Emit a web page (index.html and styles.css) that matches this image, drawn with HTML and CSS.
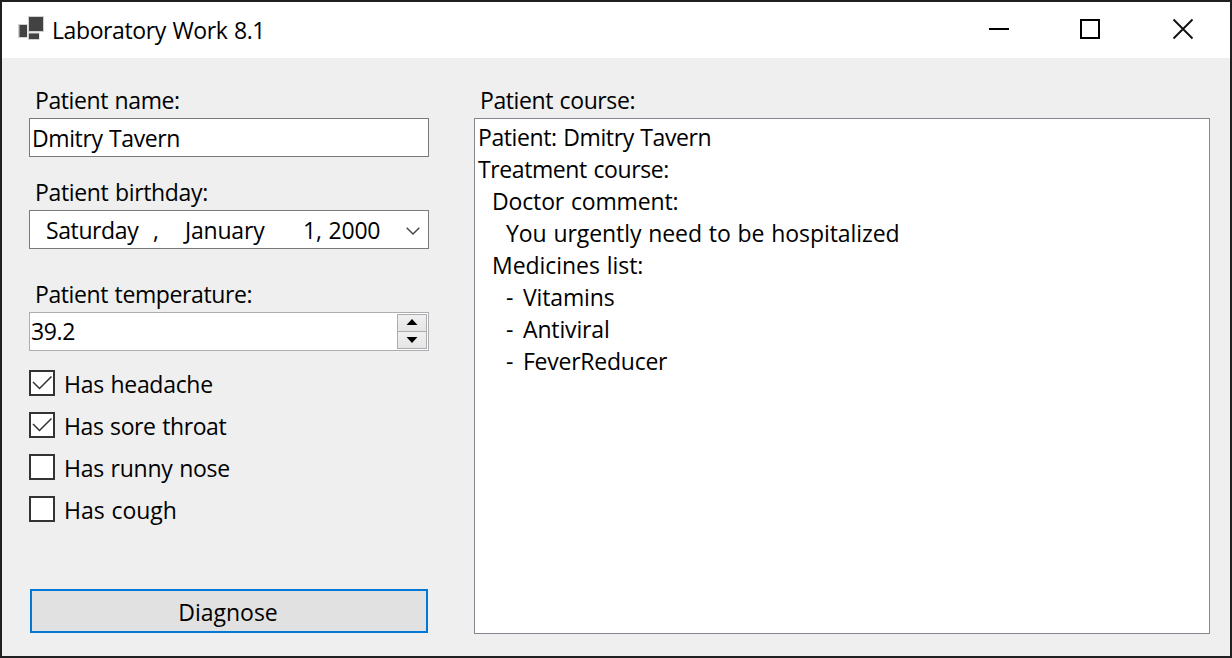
FILE: index.html
```
<!DOCTYPE html>
<html lang="en">
<head>
<meta charset="utf-8">
<title>Laboratory Work 8.1</title>
<link rel="stylesheet" href="styles.css">
</head>
<body>
<div class="window">
  <header class="titlebar">
    <svg class="app-icon" width="26" height="24" viewBox="0 0 26 24">
      <g fill="#d0d0d0"><rect x="10" y="0" width="16" height="16"/><rect x="0" y="8" width="9.500" height="14"/><rect x="10" y="16.500" width="11.500" height="7.500"/></g>
      <g fill="#424242"><rect x="11" y="1" width="14" height="14"/><rect x="1.500" y="9" width="7.500" height="12"/><rect x="11" y="17.500" width="10" height="5.500"/></g>
    </svg>
    <span class="title">Laboratory Work 8.1</span>
    <div class="controls">
      <svg class="control" width="92" height="56" viewBox="0 0 92 56"><path d="M35 27h20" stroke="#000" stroke-width="2"/></svg>
      <svg class="control" width="92" height="56" viewBox="0 0 92 56"><rect x="35" y="18" width="18" height="18" fill="none" stroke="#000" stroke-width="2"/></svg>
      <svg class="control" width="92" height="56" viewBox="0 0 92 56"><path d="M35.500 17.500l19 19M54.500 17.500l-19 19" stroke="#111" stroke-width="1.900"/></svg>
    </div>
  </header>
  <main class="form">
    <section class="inputs">
      <div class="label">Patient name:</div>
      <div class="box name">Dmitry Tavern</div>
      <div class="label birthday-label">Patient birthday:</div>
      <div class="box date">
        <span class="weekday">Saturday</span><span class="comma">,</span><span class="month">January</span><span class="day">1, 2000</span>
        <svg class="chevron" width="14" height="8" viewBox="0 0 14 8"><path d="M.700.700L7 7L13.300.700" fill="none" stroke="#444" stroke-width="1.400"/></svg>
      </div>
      <div class="label temperature-label">Patient temperature:</div>
      <div class="box temperature">
        <span>39.2</span>
        <div class="spinner">
          <div class="spin up"><svg width="12" height="6" viewBox="0 0 12 6"><path d="M6 0l5.500 6H.500z"/></svg></div>
          <div class="spin"><svg width="12" height="6" viewBox="0 0 12 6"><path d="M6 6L.500 0h11z"/></svg></div>
        </div>
      </div>
      <div class="checks">
        <div class="check"><svg class="tick" width="26" height="26" viewBox="0 0 26 26"><path d="M4 12l6.500 6.500L22.500 6.500" fill="none" stroke="#333" stroke-width="1.500"/></svg><span class="headache">Has headache</span></div>
        <div class="check"><svg class="tick" width="26" height="26" viewBox="0 0 26 26"><path d="M4 12l6.500 6.500L22.500 6.500" fill="none" stroke="#333" stroke-width="1.500"/></svg><span>Has sore throat</span></div>
        <div class="check"><svg class="tick" width="26" height="26"></svg><span class="runny-nose">Has runny nose</span></div>
        <div class="check"><svg class="tick" width="26" height="26"></svg><span class="cough">Has cough</span></div>
      </div>
      <div class="button">Diagnose</div>
    </section>
    <section class="course">
      <div class="label">Patient course:</div>
      <div class="output">
        <div class="line">Patient: Dmitry Tavern</div>
        <div class="line">Treatment course:</div>
        <div class="line section comment-title">Doctor comment:</div>
        <div class="line entry comment">You urgently need to be hospitalized</div>
        <div class="line section medicines-title">Medicines list:</div>
        <div class="line entry medicine"><span class="dash">-</span>Vitamins</div>
        <div class="line entry medicine"><span class="dash">-</span>Antiviral</div>
        <div class="line entry medicine fever"><span class="dash">-</span>FeverReducer</div>
      </div>
    </section>
  </main>
</div>
</body>
</html>
```
FILE: styles.css
```
* { box-sizing: border-box; }
body {
  margin: 0;
  font-family: "Open Sans", "Noto Sans", sans-serif;
  font-size: 23px;
  line-height: 32px;
  letter-spacing: -0.4px;
  word-spacing: 1px;
  color: #000;
}
svg { display: block; flex: none; }
.window {
  width: 1232px;
  height: 658px;
  border: 2px solid #202022;
  background: #efefef;
  display: flex;
  flex-direction: column;
}
.titlebar {
  height: 56px;
  background: #fff;
  display: flex;
  align-items: flex-start;
}
.app-icon { margin: 14px 0 0 16px; }
.title { margin: 12px 0 0 8px; letter-spacing: -0.4px; }
.controls { display: flex; margin-left: auto; }
.form { flex: 1; display: flex; padding: 26px 20px 0 27px; }
.inputs { width: 400px; }
.course { width: 736px; margin-left: 45px; }
.label { height: 34px; padding-left: 6px; }
.box {
  height: 39px;
  border: 1px solid #7a7a7a;
  background: #fff;
  display: flex;
}
.name { padding: 3px 0 0 2px; }
.birthday-label { margin-top: 19px; letter-spacing: -0.35px; }
.date { padding-top: 3px; }
.weekday { width: 107px; padding-left: 16px; }
.comma { flex: none; width: 17px; padding-left: 16px; }
.month { width: 120px; padding-left: 31px; letter-spacing: -0.2px; }
.day { margin-left: 29px; letter-spacing: -0.2px; }
.chevron { margin: 13px 8px 0 auto; }
.temperature-label { margin-top: 29px; }
.temperature { border-color: #abadb3; padding: 2px 0 0 1px; }
.spinner { margin: -2px 0 0 auto; padding: 1px 1px 1px 0; }
.spin {
  width: 30px;
  height: 18px;
  margin-bottom: -1px;
  border: 1px solid #acacac;
  background: linear-gradient(#f0f0f0, #e5e5e5);
  display: flex;
  align-items: center;
  justify-content: center;
}
.up { padding-bottom: 2px; }
.checks { margin-top: 19px; display: grid; gap: 16px; }
.check { height: 26px; display: flex; gap: 9px; line-height: 28px; }
.tick { background: #fff; box-shadow: inset 0 0 0 2px #333; }
.headache { letter-spacing: -0.3px; }
.runny-nose { letter-spacing: -0.27px; }
.cough { letter-spacing: -0.05px; }
.button {
  width: 398px;
  height: 44px;
  margin: 67px 0 0 1px;
  padding: 2px 2px 0 0;
  border: 2px solid #0078d7;
  background: #e1e1e1;
  display: flex;
  align-items: center;
  justify-content: center;
  letter-spacing: 0;
}
.output {
  height: 516px;
  border: 1px solid #828790;
  background: #fff;
  padding: 2px 0 0 3px;
}
.line { height: 32px; display: flex; }
.section { padding-left: 14px; }
.entry { padding-left: 28px; }
.comment-title { letter-spacing: -0.15px; }
.comment { letter-spacing: -0.08px; }
.medicines-title { letter-spacing: -0.05px; }
.medicine { letter-spacing: -0.15px; }
.fever { letter-spacing: -0.25px; }
.dash { width: 17px; }
```
